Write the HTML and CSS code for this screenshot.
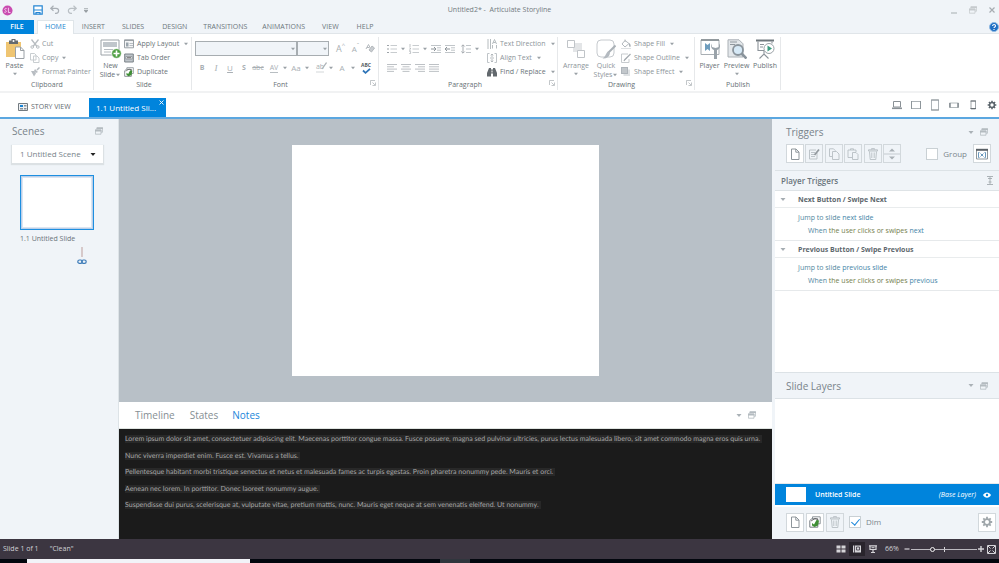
FILE: index.html
```html
<!DOCTYPE html>
<html lang="en">
<head>
<meta charset="utf-8">
<title>Untitled2* - Articulate Storyline</title>
<link rel="stylesheet" href="styles.css">
</head>
<body>
<svg class="defs" aria-hidden="true">
  <symbol id="caret" viewBox="0 0 6 4"><path d="M1 .8h4L3 3.2z" fill="currentColor"/></symbol>
  <symbol id="restore" viewBox="0 0 10 10"><path d="M2.500 3V1h7v5.500h-2M.5 3.500h7v5.500h-7z" fill="none" stroke="currentColor"/><path d="M2 .5h8v2H2zM0 3.500h8v2H0z" fill="currentColor"/></symbol>
  <symbol id="launch" viewBox="0 0 6 6"><path d="M.5 5V.5H5M2.500 2.500L5 5M5.500 2.500v3h-3" fill="none" stroke="currentColor" stroke-width=".7"/></symbol>
  <symbol id="page" viewBox="0 0 12 12"><path d="M2.500 1h4.500l3 3v7.500H2.500zM6.800 1v3.200H10" fill="none" stroke="currentColor"/></symbol>
  <symbol id="trash" viewBox="0 0 12 12"><path d="M1.500 3V1.800h9V3zM4.500 1.500V.6h3v.9M2.500 3.500l.7 8h5.600l.7-8M4.800 4.500v5.500M7.200 4.500v5.500" fill="none" stroke="currentColor" stroke-width=".9"/></symbol>
  <symbol id="gear" viewBox="0 0 12 12"><path d="M6 .8v10.400M.8 6h10.400M2.300 2.300l7.400 7.400M9.700 2.300l-7.400 7.400" stroke="currentColor" stroke-width="1.800"/><circle cx="6" cy="6" r="2.900" fill="var(--gear-hole)" stroke="currentColor" stroke-width="1.800"/></symbol>
  <symbol id="duplicate" viewBox="0 0 12 12"><path d="M3.500 3V.8h7.700v7H9" fill="none" stroke="#8d9499"/><path d="M.8 4.500l2-1.700h6v8.400h-8z" fill="#fff" stroke="#777e83"/><path d="M3 7l2 1.500L7.500 4l2.500.5-1 5-3.500 1.500L3 9.500z" fill="#3f8f35"/><path d="M2 5l4-2.500 3 1" fill="none" stroke="#555" stroke-width=".8"/></symbol>
  <symbol id="lines" viewBox="0 0 10 8"><path d="M0 .5h10M0 2.800h7M0 5.100h10M0 7.400h7" stroke="currentColor" stroke-width=".9"/></symbol>
</svg>

<div class="app">
  <header class="titlebar">
    <div class="quick">
      <svg class="logo" viewBox="0 0 12 12"><circle cx="6" cy="6" r="5.500" fill="#c94bb0"/><path d="M5 3.800c-2-.6-2.800 1.300-1.200 2s1 2.700-1.300 2M7 3v5.200h2.300" fill="none" stroke="#f6d6ef" stroke-width="1"/></svg>
      <button aria-label="Save"><svg class="i10" viewBox="0 0 10 10"><path d="M.8.8h8.400v8.400H.8z" fill="#fff" stroke="#2585d3" stroke-width="1.200"/><path d="M.8 5h8.400M3 9.200V7.500h4v1.700" stroke="#2585d3" stroke-width="1.200" fill="none"/></svg></button>
      <button aria-label="Undo"><svg class="i10" viewBox="0 0 10 10"><path d="M3.500.8L.8 3.300l2.700 2.500M1 3.300h5c3.500 0 3.500 5 0 5H5" fill="none" stroke="#a9afb5" stroke-width="1.200"/></svg></button>
      <button aria-label="Redo"><svg class="i10" viewBox="0 0 10 10"><path d="M6.500.8l2.700 2.500-2.700 2.500M9 3.300H4c-3.500 0-3.500 5 0 5h1" fill="none" stroke="#b9bfc4" stroke-width="1.200"/></svg></button>
      <button aria-label="Customize"><svg class="cust" viewBox="0 0 4 5"><path d="M0 .5h4M0 2.200h4L2 4.500z" stroke="#8e959b" stroke-width=".6" fill="#8e959b"/></svg></button>
    </div>
    <h1>Untitled2* -&nbsp; Articulate Storyline</h1>
    <div class="winbtns">
      <button aria-label="Minimize"><svg class="i8" viewBox="0 0 8 8"><path d="M1 7h6" stroke="#b3b9bd" stroke-width="1.200"/></svg></button>
      <button aria-label="Restore"><svg class="i8 pale" viewBox="0 0 10 10"><use href="#restore"/></svg></button>
      <button aria-label="Close"><svg class="i8" viewBox="0 0 8 8"><path d="M1.500 1.500l5 5M6.500 1.500l-5 5" stroke="#a6acb1" stroke-width="1.200"/></svg></button>
    </div>
  </header>

  <nav class="menu">
    <a class="file" href="#">FILE</a>
    <a class="on" href="#">HOME</a>
    <a href="#">INSERT</a>
    <a class="wide" href="#">SLIDES</a>
    <a class="wide" href="#">DESIGN</a>
    <a class="narrow" href="#">TRANSITIONS</a>
    <a href="#">ANIMATIONS</a>
    <a class="wide" href="#">VIEW</a>
    <a class="wide" href="#">HELP</a>
    <button class="help" aria-label="Help"><svg viewBox="0 0 10 10"><circle cx="5" cy="5" r="4.500" fill="#1f6fc4" stroke="#8fb9e2"/><path d="M3.600 3.900c0-1.900 3-1.800 2.900 0 0 1.100-1.500 1-1.500 2.200M5 7v1" fill="none" stroke="#fff" stroke-width="1.100"/></svg></button>
  </nav>

  <section class="ribbon" aria-label="Ribbon">
    <div class="group g-clip">
      <div class="tools">
        <button class="big"><svg viewBox="0 0 20 20"><path d="M1 3h15v15H1z" fill="#efc572"/><path d="M4 5V1.500h2.500V0h4v1.500H13V5z" fill="#646a70"/><circle cx="8.500" cy="2" r="1" fill="#fff"/><path d="M10.500 8h5l3.500 3.500V19.500h-8.500zM15.500 8v3.500H19" fill="#fff" stroke="#9aa0a5"/></svg><span>Paste</span><svg class="caret"><use href="#caret"/></svg></button>
        <div class="list">
          <button class="dim"><svg class="ic" viewBox="0 0 10 10"><path d="M1.500.5l5.500 7M8.500.5L3 7.500" stroke="#b8bdc1" stroke-width="1.300"/><circle cx="2.200" cy="8" r="1.300" fill="none" stroke="#b8bdc1"/><circle cx="7.800" cy="8" r="1.300" fill="none" stroke="#b8bdc1"/></svg>Cut</button>
          <button class="dim"><svg class="ic" viewBox="0 0 10 10"><path d="M.5.5h4l1.500 1.500v5H.5zM3.500 3h3.500l2 2v4.500H3.500z" fill="#fff" stroke="#c3c8cc" stroke-width=".9"/></svg>Copy<svg class="caret"><use href="#caret"/></svg></button>
          <button class="dim"><svg class="ic" viewBox="0 0 10 10"><path d="M9.500.5L7 3" stroke="#b4babf" stroke-width="1.500"/><path d="M5 2l3 3-2 1-2-2zM1 4l3 0 2 2.500-2 3z" fill="#b8bdc2"/></svg>Format Painter</button>
        </div>
      </div>
      <div class="gname">Clipboard</div>
    </div>

    <div class="group g-slide">
      <div class="tools">
        <button class="big"><svg class="new" viewBox="0 0 22 20"><path d="M1 1h18v15H1z" fill="#fff" stroke="#9ba2a7"/><path d="M3 3h14v5H3z" fill="#c0c6cb"/><path d="M4 10.500h9M4 13h7" stroke="#b6bcc1"/><circle cx="16.500" cy="14.500" r="4.800" fill="#4f9f43" stroke="#fff" stroke-width=".6"/><path d="M16.500 11.500v6M13.500 14.500h6" stroke="#fff" stroke-width="1.600"/></svg><span>New</span><span class="row">Slide<svg class="caret"><use href="#caret"/></svg></span></button>
        <div class="list">
          <button><svg class="ic" viewBox="0 0 10 10"><path d="M.5.8h9v8h-9z" fill="#f4f5f6" stroke="#9aa0a5"/><path d="M.5 1.500h9" stroke="#9aa0a5"/><path d="M2 3.500h2.500v4H2z" fill="#9aa4ac"/><path d="M5.500 4.500H9M5.500 6.500H9" stroke="#b7bdc2"/></svg>Apply Layout<svg class="caret"><use href="#caret"/></svg></button>
          <button><svg class="ic" viewBox="0 0 10 10"><path d="M.7 1h8.600v8H.7z" fill="#bfc5ca" stroke="#7b8288"/><path d="M2 3.500h6v2.500H2z" fill="#fff" stroke="#747b80" stroke-width=".6"/><path d="M3 4.800h4" stroke="#555"/></svg>Tab Order</button>
          <button><svg class="ic" viewBox="0 0 12 12"><use href="#duplicate"/></svg>Duplicate</button>
        </div>
      </div>
      <div class="gname">Slide</div>
    </div>

    <div class="group g-font">
      <div class="rows">
        <div class="line first">
          <label class="combo face"><select aria-label="Font"><option></option></select><svg class="caret"><use href="#caret"/></svg></label>
          <label class="combo size"><select aria-label="Font size"><option></option></select><svg class="caret"><use href="#caret"/></svg></label>
          <button class="cell grow-btn" aria-label="Grow font">A<sup>^</sup></button>
          <button class="cell shrink-btn" aria-label="Shrink font">A<sup>ˇ</sup></button>
          <button class="cell" aria-label="Clear formatting"><svg class="i10" viewBox="0 0 10 10"><path d="M1 5L3.500.5 5 3.500M2 3.500h2.500" fill="none" stroke="#b3b8bc"/><path d="M4 6l3-4 2.500 2-3 4z" fill="#c9cdd1" stroke="#b3b8bc"/></svg></button>
        </div>
        <div class="line second">
          <button class="cell"><b>B</b></button><button class="cell it">I</button><button class="cell ul"><u>U</u></button><button class="cell"><b>S</b></button><button class="cell"><s>abc</s></button>
          <button class="cell gap" aria-label="Character spacing"><span class="spacing">AV</span></button><button class="drop" aria-label="Spacing options"><svg class="caret"><use href="#caret"/></svg></button>
          <button class="cell case">Aa</button><button class="drop" aria-label="Case options"><svg class="caret"><use href="#caret"/></svg></button>
          <button class="cell gap" aria-label="Highlight"><span class="mark">ab</span><svg class="pen" viewBox="0 0 6 8"><path d="M5.500.5L1 7" stroke="#aeb4b8" stroke-width="1.300"/></svg></button><button class="drop" aria-label="Highlight options"><svg class="caret"><use href="#caret"/></svg></button>
          <button class="cell case">A</button><button class="drop" aria-label="Colour options"><svg class="caret"><use href="#caret"/></svg></button>
          <button class="cell gap spell"><span>ABC</span><svg viewBox="0 0 9 6"><path d="M1 2.500l2.500 2.300L8 .8" fill="none" stroke="#2f75b8" stroke-width="1.800"/></svg></button>
        </div>
      </div>
      <div class="gname has-launch">Font</div><button class="launch" aria-label="Font settings"><svg><use href="#launch"/></svg></button>
    </div>

    <div class="group g-para">
      <div class="tools">
        <div class="rows">
          <div class="line first">
            <button class="cell" aria-label="Bullets"><svg class="i10" viewBox="0 0 10 10"><path d="M0 1.500h2M0 5h2M0 8.500h2" stroke="#9da3a8" stroke-width="1.200"/><path d="M3.500 1.500H10M3.500 5H10M3.500 8.500H10" stroke="#c8cccf"/></svg></button><button class="drop" aria-label="Bullet options"><svg class="caret"><use href="#caret"/></svg></button>
            <button class="cell" aria-label="Numbering"><svg class="i10" viewBox="0 0 10 10"><path d="M1 0v3M.3 4h1.200v1L.3 6.200h1.500M.3 7.500h1.300v2H.3" fill="none" stroke="#b0b5b9" stroke-width=".8"/><path d="M3.500 1.500H10M3.500 5H10M3.500 8.500H10" stroke="#c8cccf"/></svg></button><button class="drop" aria-label="Number options"><svg class="caret"><use href="#caret"/></svg></button>
            <button class="cell" aria-label="Increase indent"><svg class="i10" viewBox="0 0 10 10"><path d="M0 1.500h10M0 8.500h10M6 3.800h4M6 6.200h4" stroke="#c0c5c9"/><path d="M0 5h5M3 3l2 2-2 2" fill="none" stroke="#8d9499"/></svg></button>
            <button class="cell" aria-label="Decrease indent"><svg class="i10" viewBox="0 0 10 10"><path d="M0 1.500h10M0 8.500h10M6 3.800h4M6 6.200h4" stroke="#c0c5c9"/><path d="M0 5h5M2 3L0 5l2 2" fill="none" stroke="#8d9499"/></svg></button>
            <button class="cell gap" aria-label="Line spacing"><svg class="i10" viewBox="0 0 10 10"><path d="M2 1v8M.3 2.500L2 .8l1.700 1.700M.3 7.500L2 9.200l1.700-1.700" fill="none" stroke="#9da3a8" stroke-width=".9"/><path d="M5 1.500h5M5 5h5M5 8.500h5" stroke="#c0c5c9"/></svg></button><button class="drop" aria-label="Line spacing options"><svg class="caret"><use href="#caret"/></svg></button>
          </div>
          <div class="line second">
            <button class="cell" aria-label="Align left"><svg class="al"><use href="#lines"/></svg></button>
            <button class="cell" aria-label="Align centre"><svg class="al" viewBox="0 0 10 8"><path d="M0 .5h10M1.500 2.800h7M0 5.100h10M1.500 7.400h7" stroke="currentColor" stroke-width=".9"/></svg></button>
            <button class="cell" aria-label="Align right"><svg class="al" viewBox="0 0 10 8"><path d="M0 .5h10M3 2.800h7M0 5.100h10M3 7.400h7" stroke="currentColor" stroke-width=".9"/></svg></button>
            <button class="cell" aria-label="Justify"><svg class="al" viewBox="0 0 10 8"><path d="M0 .5h10M0 2.800h10M0 5.100h10M0 7.400h10" stroke="currentColor" stroke-width=".9"/></svg></button>
          </div>
        </div>
        <div class="list">
          <button class="mid"><svg class="ic" viewBox="0 0 10 10"><path d="M1 0v10M3.500 0v10M5.500 9.500V6M9.500 9.500V6M5.500 5l2-4.500 2 4.500M6.300 3.500h2.400" fill="none" stroke="#aeb4b8" stroke-width=".9"/></svg>Text Direction<svg class="caret"><use href="#caret"/></svg></button>
          <button class="mid"><svg class="ic" viewBox="0 0 10 10"><path d="M2.500.5h-2v9h2M7.500.5h2v9h-2" fill="none" stroke="#bfc4c8"/><path d="M5 1v3M3.800 2.300L5 1l1.200 1.300M5 9V6M3.800 7.700L5 9l1.200-1.300M3 5h4" fill="none" stroke="#a5abb0" stroke-width=".8"/></svg>Align Text<svg class="caret"><use href="#caret"/></svg></button>
          <button><svg class="ic" viewBox="0 0 10 10"><path d="M2 1h2v1.500h2V1h2l2 5v3.500H6V6.500H4v3H0V6z" fill="#62686d"/><path d="M4.500 3.500h1v2h-1z" fill="#fff"/></svg>Find / Replace<svg class="caret"><use href="#caret"/></svg></button>
        </div>
      </div>
      <div class="gname has-launch">Paragraph</div><button class="launch" aria-label="Paragraph settings"><svg><use href="#launch"/></svg></button>
    </div>

    <div class="group g-draw">
      <div class="tools">
        <button class="big dim"><svg viewBox="0 0 20 20"><path d="M7 4h9v9H7z" fill="#e3e5e7"/><path d="M1.500 1.500h7v7h-7zM11.500 11.500h7v7h-7z" fill="#fff" stroke="#c0c4c8"/></svg><span>Arrange</span><svg class="caret"><use href="#caret"/></svg></button>
        <button class="big dim"><svg viewBox="0 0 20 20"><rect x="1" y="1" width="17" height="17" rx="4" fill="#fff" stroke="#c6cace"/><path d="M19.500 6.500L12 14" stroke="#aab1b7" stroke-width="2"/><path d="M12 12.500l2 2c-1 4-4 5.500-7.500 5 3-1.500 3-5 5.500-7z" fill="#b4bac0"/></svg><span>Quick</span><span class="row">Styles<svg class="caret"><use href="#caret"/></svg></span></button>
        <div class="list">
          <button class="mid"><svg class="ic" viewBox="0 0 10 10"><path d="M4 1.500l4 3-4 3.500-3-3zM4 3V.5" fill="none" stroke="#b3b9bd"/><path d="M8 4c2 1 2 4 1 4s-1-2-1-4z" fill="#a4abb0"/><path d="M0 9.500h10" stroke="#dde0e2"/></svg>Shape Fill<svg class="caret"><use href="#caret"/></svg></button>
          <button class="mid"><svg class="ic" viewBox="0 0 10 10"><path d="M7 1H.5v8.500H8V6" fill="none" stroke="#c7cbce"/><path d="M9.500 1L4 6.500 3 8" stroke="#a9afb4" stroke-width="1.300"/></svg>Shape Outline<svg class="caret"><use href="#caret"/></svg></button>
          <button class="mid"><svg class="ic" viewBox="0 0 10 10"><path d="M2.500 2.500H9V9H2.500z" fill="#dfe2e4"/><path d="M0 0h7v7H0z" fill="#aeb4ba"/><path d="M1 1h5v5H1z" fill="#c2c7cb"/></svg>Shape Effect<svg class="caret"><use href="#caret"/></svg></button>
        </div>
      </div>
      <div class="gname has-launch">Drawing</div><button class="launch" aria-label="Drawing settings"><svg><use href="#launch"/></svg></button>
    </div>

    <div class="group g-pub">
      <div class="tools">
        <button class="big"><svg viewBox="0 0 20 20"><path d="M1 1h18v14.500H1z" fill="#fff" stroke="#a9afb4"/><path d="M1 1h18" stroke="#7c8489" stroke-width="1.500"/><path d="M5 4v8l2.500-2L10 12V4L7.500 6z" fill="#6f9dbd"/><path d="M12 4.500c-2 4 0 6 2 6.500V20h3V11c3-1 4-4 2-6.500V8l-3.500 1L12 8z" fill="#9aa3aa"/></svg><span>Player</span></button>
        <button class="big"><svg viewBox="0 0 20 20"><path d="M1 .8h11l4 4V18H1z" fill="#e3e7ea" stroke="#aab0b5"/><path d="M3 3h7M3 5.500h5" stroke="#8f979d"/><circle cx="11" cy="11" r="5" fill="#d6e9f6" stroke="#8a949c" stroke-width="1.800"/><path d="M14.500 14.500l5 5" stroke="#8a949c" stroke-width="2.600"/></svg><span>Preview</span><svg class="caret"><use href="#caret"/></svg></button>
        <button class="big"><svg viewBox="0 0 20 20"><path d="M1 1.500h18" stroke="#6f777c" stroke-width="2"/><path d="M3 2.500v9h6M17 2.500v2M5 5.500h4M5 8h3M9 12v4M4.500 19.500L9 15l4.500 4.500" fill="none" stroke="#8b9399" stroke-width="1.100"/><circle cx="14" cy="9.500" r="5" fill="#fff" stroke="#9ba2a7"/><path d="M12.500 6.500l4.500 3-4.500 3z" fill="#3d9b80"/></svg><span>Publish</span></button>
      </div>
      <div class="gname">Publish</div>
    </div>
  </section>

  <div class="docs">
    <a class="story" href="#"><svg viewBox="0 0 10 8"><path d="M.5.5h9v7h-9z" fill="#eef1f3" stroke="#737b81"/><path d="M2 2h3v2H2z" fill="#1683d6"/><path d="M6 2h2.500v1.500H6zM2 5h3v1.500H2zM6 5h2.500v1.500H6z" fill="#87929a"/></svg>STORY VIEW</a>
    <div class="slide-tab"><a href="#">1.1 Untitled Sli...</a><button aria-label="Close tab"><svg viewBox="0 0 5 5"><path d="M.5.5l4 4M4.500.5l-4 4" stroke="#fff" stroke-width=".9"/></svg></button></div>
    <div class="devices">
      <button aria-label="Desktop"><svg viewBox="0 0 12 12"><path d="M2.500 2.500h7v5.500h-7z" fill="#fff" stroke="#8a9196"/><path d="M1 9.300h10" stroke="#8a9196" stroke-width="1.600"/></svg></button>
      <button aria-label="Tablet landscape"><svg viewBox="0 0 12 12"><path d="M1.500 2.500h9v7h-9z" fill="#fff" stroke="#adb3b7"/><path d="M1.500 2v8M10.500 2v8" stroke="#8e969b"/></svg></button>
      <button aria-label="Tablet portrait"><svg viewBox="0 0 12 12"><path d="M2.500 1h7v10h-7z" fill="#fff" stroke="#adb3b7"/><path d="M2 1h8M2 11h8" stroke="#8e969b"/></svg></button>
      <button aria-label="Phone landscape"><svg viewBox="0 0 12 12"><path d="M1.500 4h9v4.500h-9z" fill="#fff" stroke="#b4babd"/><path d="M2 4v4.500M10 4v4.500" stroke="#848c91" stroke-width="1.500"/></svg></button>
      <button aria-label="Phone portrait"><svg viewBox="0 0 12 12"><path d="M4 2h4.500v8H4z" fill="#fff" stroke="#a0a6aa"/><path d="M3.500 2h5.500M3.500 9.500h5.500" stroke="#686f74" stroke-width="1.200"/></svg></button>
      <button class="settings" aria-label="Player settings"><svg viewBox="0 0 12 12"><use href="#gear"/></svg></button>
    </div>
  </div>

  <main class="work">
    <aside class="scenes">
      <div class="phead"><h2>Scenes</h2><button aria-label="Undock"><svg class="i8"><use href="#restore"/></svg></button></div>
      <label class="scene-pick"><select aria-label="Scene"><option>1 Untitled Scene</option></select><svg class="caret"><use href="#caret"/></svg></label>
      <a class="thumb" href="#" aria-label="Slide 1.1"></a>
      <div class="thumb-name">1.1 Untitled Slide</div>
      <svg class="chain" viewBox="0 0 10 18"><path d="M5 0v10" stroke="#bd9e9c" stroke-width="1"/><rect x=".8" y="13" width="4.500" height="3.400" rx="1.700" fill="none" stroke="#3b7ab8" stroke-width="1.200"/><rect x="4.700" y="13" width="4.500" height="3.400" rx="1.700" fill="none" stroke="#3b7ab8" stroke-width="1.200"/></svg>
    </aside>

    <section class="center">
      <div class="stage"><div class="slide"></div></div>
      <div class="panel-tabs">
        <a href="#">Timeline</a><a href="#">States</a><a class="on" href="#">Notes</a>
        <span class="dock"><button aria-label="Collapse"><svg class="caret"><use href="#caret"/></svg></button><button aria-label="Undock"><svg class="i8"><use href="#restore"/></svg></button></span>
      </div>
      <div class="notes">
        <p><mark>Lorem ipsum dolor sit amet, consectetuer adipiscing elit. Maecenas porttitor congue massa. Fusce posuere, magna sed pulvinar ultricies, purus lectus malesuada libero, sit amet commodo magna eros quis urna.</mark></p>
        <p><mark>Nunc viverra imperdiet enim. Fusce est. Vivamus a tellus.</mark></p>
        <p><mark>Pellentesque habitant morbi tristique senectus et netus et malesuada fames ac turpis egestas. Proin pharetra nonummy pede. Mauris et orci.</mark></p>
        <p><mark>Aenean nec lorem. In porttitor. Donec laoreet nonummy augue.</mark></p>
        <p><mark>Suspendisse dui purus, scelerisque at, vulputate vitae, pretium mattis, nunc. Mauris eget neque at sem venenatis eleifend. Ut nonummy.</mark></p>
      </div>
    </section>

    <aside class="right">
      <section class="triggers">
        <div class="thead">
          <div class="phead"><h2>Triggers</h2><span class="dock"><button aria-label="Collapse"><svg class="caret"><use href="#caret"/></svg></button><button aria-label="Undock"><svg class="i8"><use href="#restore"/></svg></button></span></div>
          <div class="tbar">
            <div class="edit">
              <button class="sq live" aria-label="New trigger"><svg><use href="#page"/></svg></button>
              <button class="sq" aria-label="Edit trigger"><svg viewBox="0 0 12 12"><path d="M9 5v6H1.500V2H8M3 4.500h4M3 6.500h3M3 8.500h4" fill="none" stroke="currentColor" stroke-width=".9"/><path d="M11 1.500L6.500 7" stroke="#92999e" stroke-width="1.800"/></svg></button>
              <button class="sq" aria-label="Copy trigger"><svg viewBox="0 0 12 12"><path d="M4 8.500H1.500V.8h4l2 2M4.500 3.500h4L11 6v5.500H4.500z" fill="none" stroke="currentColor" stroke-width=".9"/></svg></button>
              <button class="sq" aria-label="Paste trigger"><svg viewBox="0 0 12 12"><path d="M5 9.500H1V2h8v2M3.500 2V.8h3V2M5.500 4.500h3.500l2 2v5H5.500z" fill="none" stroke="currentColor" stroke-width=".9"/></svg></button>
              <button class="sq" aria-label="Delete trigger"><svg><use href="#trash"/></svg></button>
              <button class="sq move" aria-label="Move trigger"><svg viewBox="0 0 16 16"><path d="M5 5.500h6L8 2.500zM5 10.500h6l-3 3z" fill="#a9b0b5"/><path d="M0 8h16" stroke="#c4cacf"/></svg></button>
            </div>
            <label class="check"><input type="checkbox">Group</label>
            <button class="sq live" aria-label="Variables"><svg viewBox="0 0 12 12"><path d="M.5 1.500h11v9.500H.5z" fill="#fff" stroke="#8f979c"/><path d="M0 1.800h12" stroke="#596066" stroke-width="2"/><path d="M3.500 4.500h-1v5h1M8.500 4.500h1v5h-1M4.500 5.500l3 3M7.500 5.500l-3 3" fill="none" stroke="#5a8db5" stroke-width=".9"/></svg></button>
          </div>
        </div>
        <div class="tlist">
          <h3>Player Triggers<svg class="fold" viewBox="0 0 8 9"><path d="M1 .5h6M1 8.500h6M4 1v7M2 2.500h4M2.500 6h3" stroke="#a3aaaf" stroke-width=".9"/></svg></h3>
          <article><h4><svg class="caret"><use href="#caret"/></svg>Next Button / Swipe Next</h4><p>Jump to slide <a href="#">next slide</a></p><p class="sub">When <i>the user clicks or swipes</i> <a href="#">next</a></p></article>
          <article><h4><svg class="caret"><use href="#caret"/></svg>Previous Button / Swipe Previous</h4><p>Jump to slide <a href="#">previous slide</a></p><p class="sub">When <i>the user clicks or swipes</i> <a href="#">previous</a></p></article>
        </div>
      </section>
      <section class="layers">
        <div class="phead"><h2>Slide Layers</h2><span class="dock"><button aria-label="Collapse"><svg class="caret"><use href="#caret"/></svg></button><button aria-label="Undock"><svg class="i8"><use href="#restore"/></svg></button></span></div>
        <div class="lspace"></div>
        <div class="base"><span class="mini"></span><b>Untitled Slide</b><em>(Base Layer)</em><svg viewBox="0 0 8 6"><path d="M0 3C2-.5 6-.5 8 3 6 6.500 2 6.500 0 3z" fill="#fff"/><circle cx="4" cy="3" r="1.200" fill="#0084dc"/></svg></div>
        <div class="lbar">
          <button class="sq live" aria-label="New layer"><svg><use href="#page"/></svg></button>
          <button class="sq live" aria-label="Duplicate layer"><svg><use href="#duplicate"/></svg></button>
          <button class="sq" aria-label="Delete layer"><svg><use href="#trash"/></svg></button>
          <label class="check"><input type="checkbox" checked>Dim</label>
          <button class="sq live cog" aria-label="Layer settings"><svg viewBox="0 0 12 12"><use href="#gear"/></svg></button>
        </div>
      </section>
    </aside>
  </main>

  <footer class="status">
    <span>Slide 1 of 1</span><span>"Clean"</span>
    <div class="views">
      <button aria-label="Story view"><svg viewBox="0 0 10 8"><path d="M.5.500h4v3h-4zM5.500.5h4v3h-4zM.5 4.500h4v3h-4zM5.500 4.500h4v3h-4z" fill="#d5d4d8"/></svg></button>
      <button class="on" aria-label="Slide view"><svg viewBox="0 0 10 8"><path d="M1 .5h8v7H1z" fill="#d5d4d8"/><path d="M2.500 0v8M4.500 2h3v3h-3z" fill="none" stroke="#3c3641" stroke-width=".8"/></svg></button>
      <button aria-label="Preview"><svg viewBox="0 0 10 8"><path d="M1 .8h8M2 1v3.500h6V1M5 4.500v2.500M3 7.500h4" fill="none" stroke="#d5d4d8" stroke-width="1.200"/><path d="M3.500 2.700h3" stroke="#d5d4d8"/></svg></button>
      <span class="pct">66%</span>
      <button class="pm" aria-label="Zoom out"><svg viewBox="0 0 6 6"><path d="M.5 3h5" stroke="#d5d4d8" stroke-width="1.200"/></svg></button>
      <input type="range" min="0" max="100" value="31" aria-label="Zoom">
      <button class="pm" aria-label="Zoom in"><svg viewBox="0 0 6 6"><path d="M0 3h6M3 0v6" stroke="#d5d4d8" stroke-width="1.400"/></svg></button>
      <button class="fit" aria-label="Fit"><svg viewBox="0 0 9 9"><path d="M.5.5h8v8h-8zM1 1l2.500 2.500M8 1L5.500 3.500M1 8l2.500-2.500M8 8L5.500 5.500" fill="none" stroke="#d5d4d8"/></svg></button>
    </div>
  </footer>
  <div class="taskbar"><span class="search"></span><span class="running"></span></div>
</div>
</body>
</html>
```
FILE: styles.css
```css
* { box-sizing: border-box; }
:root {
  --pale: #f0f4f8;
  --blue: #0084dc;
  --text: #6a7378;
  --gear-hole: #fff;
}
body { margin: 0; font: 7px/10px "Open Sans", "Noto Sans", sans-serif; color: var(--text); background: #fff; }
button, select, input { font: inherit; color: inherit; margin: 0; }
button { display: flex; align-items: center; padding: 0; border: 0; background: none; white-space: nowrap; }
a { color: inherit; text-decoration: none; }
h1, h2, h3, h4, p { margin: 0; font-weight: 400; font-size: inherit; }
svg { display: block; flex: none; }
.defs { position: absolute; width: 0; height: 0; }
.i8 { width: 8px; height: 8px; }
.i10 { width: 10px; height: 10px; }
.caret { width: 6px; height: 4px; color: #9aa1a6; }
.app { min-height: 100vh; display: flex; flex-direction: column; }

.titlebar { height: 20px; background: var(--pale); display: grid; grid-template-columns: 1fr auto 1fr; align-items: center; }
.titlebar h1 { color: #737b81; }
.quick { display: flex; align-items: center; gap: 7px; padding-left: 2px; }
.logo { width: 11px; height: 11px; margin-right: 13px; }
.cust { width: 4px; height: 5px; }
.winbtns { display: flex; justify-content: flex-end; gap: 11px; padding-right: 3px; }
.pale { color: #c5cacd; }

.menu { height: 14px; background: var(--pale); border-bottom: 1px solid #e0e5e9; display: flex; }
.menu a { padding: 0 8px; line-height: 14px; height: 14px; color: #6c767c; }
.menu .file { width: 34px; background: var(--blue); color: #fff; font-weight: 600; text-align: center; margin-right: 3px; }
.menu .on { background: #fff; color: #2486cf; border: 1px solid #dfe5e9; border-bottom: 0; line-height: 12px; padding: 0 7px; }
.menu .wide { padding: 0 9px; }
.menu .narrow { padding: 0 7px; }
.help { margin-left: auto; }
.help svg { width: 10px; height: 10px; }

.ribbon { height: 59px; padding: 3px 0 1px; border-bottom: 2px solid #f1f2f3; display: flex; }
.group { position: relative; display: flex; flex-direction: column; border-right: 1px solid #e6e8ea; }
.g-clip { width: 94px; padding-left: 1px; }
.g-slide { width: 98px; padding-left: 3px; }
.g-font { width: 187px; padding-left: 3px; }
.g-para { width: 179px; padding-left: 6px; }
.g-draw { width: 137px; padding-left: 3px; }
.g-pub { width: 86px; padding-left: 1px; }
.tools { display: flex; height: 42px; flex: none; }
.gname { text-align: center; line-height: 11px; color: #687176; }
.has-launch { padding-right: 12px; }
.launch { position: absolute; right: 2px; bottom: 4px; color: #a9afb3; }
.launch svg { width: 6px; height: 6px; }
.big { flex-direction: column; width: 27px; padding-top: 2px; line-height: 9px; color: #687176; }
.big > svg:first-child { width: 20px; height: 20px; margin-bottom: 2px; }
.big > svg.new { width: 22px; }
.big > .caret { margin-top: 2px; }
.row { display: flex; align-items: center; }
.list { display: grid; grid-template-rows: repeat(3, 14px); align-content: start; }
.list button { gap: 3px; }
.list .ic { width: 10px; height: 10px; }
.list .caret { margin-left: 1px; }
.g-clip .big { margin-right: 2px; }
.g-clip .list button { gap: 2px; }
.dim, .mid { color: #8d959a; }
.g-draw .big { width: 30px; }
.g-pub .big:last-child { width: 30px; }

.rows { display: flex; flex-direction: column; height: 42px; flex: none; }
.line { display: flex; align-items: center; }
.first { height: 15px; margin-top: 4px; }
.second { height: 16px; margin-top: 4px; color: #a9afb4; }
.cell { width: 14px; height: 14px; justify-content: center; position: relative; }
.drop { width: 8px; height: 14px; justify-content: center; }
.gap { margin-left: 2px; }
.it { font-style: italic; font-family: "Liberation Serif", serif; font-size: 9px; }
.ul { font-size: 8px; }
.case { font-size: 8px; }
.spacing { border-bottom: 1px solid #b8bec2; line-height: 8px; }
.mark { border-bottom: 2px solid #e9ebec; line-height: 8px; }
.pen { position: absolute; width: 6px; height: 8px; right: 0; top: 1px; }
.spell { flex-direction: column; font-weight: 700; font-size: 5px; line-height: 5px; color: #555c61; }
.spell svg { width: 9px; height: 6px; }
.combo { position: relative; height: 15px; }
.combo select { appearance: none; display: block; width: 100%; height: 15px; padding: 0; border: 1px solid #a7adb1; border-radius: 0; background: var(--pale); }
.combo .caret { position: absolute; right: 1px; top: 6px; }
.face { width: 102px; }
.size { width: 32px; margin-right: 4px; }
.grow-btn, .shrink-btn { width: 15px; color: #a9afb4; font-size: 9px; }
.grow-btn sup, .shrink-btn sup { font-size: 6px; line-height: 6px; align-self: flex-start; }
.shrink-btn { font-size: 8px; }
.al { width: 10px; height: 8px; color: #b5babe; }
.g-para .rows { width: 102px; }

.docs { height: 26px; border-bottom: 2px solid #5ba7e0; display: flex; align-items: flex-end; }
.story { width: 89px; height: 20px; padding-left: 18px; display: flex; align-items: center; gap: 3px; color: #5f696f; }
.story svg { width: 10px; height: 8px; }
.slide-tab { width: 77px; height: 19px; background: var(--blue); color: #fff; display: flex; padding-left: 7px; position: relative; font-size: 8px; line-height: 20px; white-space: nowrap; }
.slide-tab button { position: absolute; right: 2px; top: 2px; }
.slide-tab button svg { width: 5px; height: 5px; }
.devices { margin-left: auto; align-self: center; display: flex; gap: 7px; padding-right: 2px; }
.devices svg { width: 12px; height: 12px; }
.devices .settings { color: #59636a; margin-left: 1px; }
.devices .settings svg { width: 10px; height: 10px; }

.work { flex: 1; display: grid; grid-template-columns: 119px minmax(0, 1fr) 227px; }
.phead { display: flex; align-items: center; justify-content: space-between; color: #b4bbc0; }
.phead h2 { font-size: 10px; line-height: 14px; color: #78838a; }
.dock { display: flex; align-items: center; gap: 5px; color: #b4bbc0; }
.dock .caret { width: 8px; height: 5px; color: #aab1b6; }

.scenes { background: var(--pale); border-right: 1px solid #dde3e7; padding: 5px 15px 0 12px; }
.scene-pick { position: relative; display: block; margin-top: 7px; }
.scene-pick select { appearance: none; display: block; width: 100%; height: 18px; padding: 0 8px; border: 0; border-radius: 0; background: #fff; box-shadow: 0 1px 1px 1px #dce1e4; font-size: 8px; color: #78838a; }
.scene-pick .caret { position: absolute; right: 6px; top: 7px; width: 8px; height: 5px; color: #222; }
.thumb { display: block; width: 74px; height: 55px; margin: 12px 0 0 8px; background: #fff; border: 1px solid #1e8fe0; box-shadow: inset 0 0 0 1px #b9cfea, inset 0 0 0 2px #dde5f0; }
.thumb-name { margin: 4px 0 0 8px; }
.chain { width: 10px; height: 18px; margin: 3px 0 0 65px; }

.center { display: flex; flex-direction: column; min-width: 0; }
.stage { flex: 1; background: #b8c0c7; display: grid; place-items: center; }
.slide { width: 47%; aspect-ratio: 4 / 3; background: #fff; }
.panel-tabs { height: 27px; display: flex; align-items: center; gap: 15px; padding: 0 16px; font-size: 10px; color: #858e93; border-bottom: 1px solid #dfe4e1; }
.panel-tabs .on { color: #1a86da; margin-left: -1px; }
.panel-tabs .dock { margin-left: auto; }
.notes { height: 110px; background: #1b1b1b; padding: 5px 6px 29px; font-family: Lato, sans-serif; text-rendering: geometricPrecision; display: flex; flex-direction: column; justify-content: space-between; white-space: nowrap; overflow: hidden; }
.notes mark { background: #282828; color: #a6a6a6; padding-right: 2px; }

.right { display: flex; flex-direction: column; border-left: 3px solid var(--pale); background: #fff; }
.thead { background: var(--pale); height: 52px; padding: 6px 8px 0 11px; border-bottom: 1px solid #dce2e6; }
.thead .phead { padding-right: 3px; }
.tbar { display: flex; align-items: center; margin-top: 5px; }
.edit { display: flex; justify-content: space-between; width: 115px; }
.sq { width: 18px; height: 19px; justify-content: center; border: 1px solid #d2d8dc; color: #b7bec3; }
.sq svg { width: 12px; height: 12px; }
.sq.move svg { width: 16px; height: 16px; }
.live { background: #fff; color: #8e969b; }
.cog { color: #a0a7ab; }
.check { display: flex; align-items: center; gap: 5px; font-size: 8px; color: #7b858b; }
.check input { appearance: none; width: 12px; height: 12px; border: 1px solid #c9d0d4; background: #fff; }
.check input:checked::after { content: ""; display: block; width: 4px; height: 7px; margin: 0 0 0 3px; border: solid #1a86da; border-width: 0 1px 1px 0; transform: rotate(40deg); }
.tbar .check { margin-left: auto; margin-right: 6px; }
.tlist h3 { background: var(--pale); height: 20px; padding: 0 5px 0 6px; font-size: 8px; line-height: 20px; color: #6a757c; font-weight: 600; border-bottom: 1px solid #dee3e6; display: flex; align-items: center; justify-content: space-between; }
.fold { width: 8px; height: 9px; }
.tlist article { border-bottom: 1px solid #e6e9eb; height: 50px; color: #5188a0; }
.tlist h4 { height: 17px; line-height: 17px; border-bottom: 1px solid #e9eced; display: flex; align-items: center; gap: 11px; padding-left: 4px; font-weight: 700; color: #5d676d; }
.tlist h4 .caret { width: 8px; height: 5px; color: #a6adb2; }
.tlist p { padding: 4px 0 0 23px; line-height: 11px; }
.tlist .sub { padding: 2px 0 0 33px; }
.tlist i { font-style: normal; color: #75804e; }
.tlist a { color: #4485a8; }

.layers { margin-top: auto; }
.layers .phead { background: var(--pale); height: 27px; padding: 0 11px; border: solid #dce2e6; border-width: 1px 0; }
.lspace { height: 85px; border-bottom: 1px solid #e6e9eb; }
.base { height: 21px; background: var(--blue); color: #fff; display: flex; align-items: center; padding: 0 8px 0 11px; }
.base b { font-weight: 600; margin-left: 9px; }
.base em { margin-left: auto; }
.base svg { width: 8px; height: 6px; margin-left: 7px; }
.mini { width: 20px; height: 15px; background: #fff; }
.lbar { height: 34px; background: var(--pale); border-top: 2px solid #fff; display: flex; align-items: center; gap: 2px; padding: 0 3px 2px 11px; }
.lbar .check { margin-left: 3px; }
.lbar > :last-child { margin-left: auto; }

.status { height: 20px; background: #3c3641; color: #d2d1d5; display: flex; align-items: center; padding: 0 2px 0 3px; gap: 11px; }
.views { margin-left: auto; display: flex; align-items: center; }
.views button { width: 16px; height: 14px; justify-content: center; }
.views .on { background: #29242c; }
.views button svg { width: 10px; height: 8px; }
.pct { width: 22px; text-align: center; }
.views .pm { width: 8px; }
.views .pm svg { width: 6px; height: 6px; }
.views .fit { width: 12px; }
.views .fit svg { width: 9px; height: 9px; }
.views input { appearance: none; width: 66px; height: 8px; background: linear-gradient(#bcbac0, #bcbac0) center / 100% 1px no-repeat, linear-gradient(#d5d4d8, #d5d4d8) 33px center / 1px 5px no-repeat; }
.views input::-webkit-slider-thumb { appearance: none; width: 5px; height: 5px; border-radius: 50%; background: #3c3641; border: 1px solid #eee; }

.taskbar { height: 4px; background: #02060d; display: flex; }
.search { width: 223px; margin-left: 27px; background: #f2f3f8; }
.running { width: 30px; margin-left: 190px; background: #30363d; }
```
